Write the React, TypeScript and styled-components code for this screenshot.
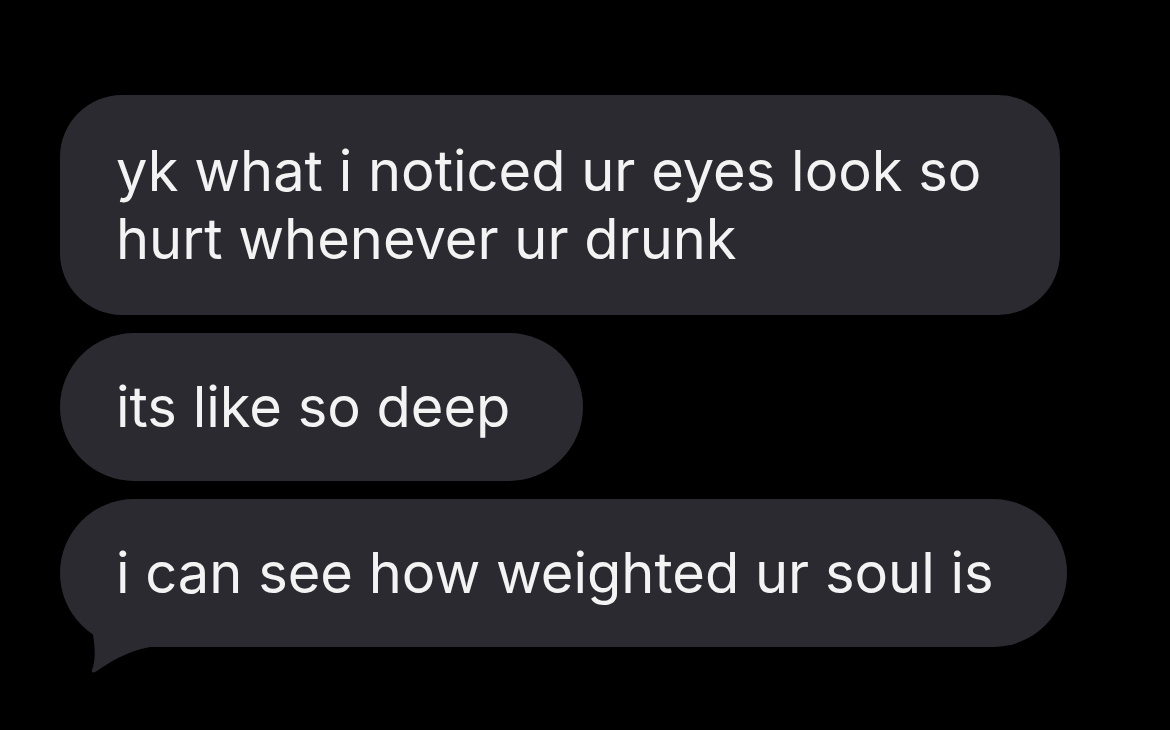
import React from "react";
import styled, { createGlobalStyle } from "styled-components";

const GlobalStyle = createGlobalStyle`
  html, body {
    margin: 0;
    padding: 0;
    background: #000;
  }
  body {
    width: 1170px;
    height: 730px;
    overflow: hidden;
  }
`;

const Screen = styled.div`
  width: 1170px;
  height: 730px;
  background: #000;
  box-sizing: border-box;
  padding: 95px 0 0 60px;
  display: flex;
  flex-direction: column;
  align-items: flex-start;
  gap: 18px;
  font-family: Inter, "Liberation Sans", Arial, sans-serif;
`;

const Bubble = styled.div<{ $multi?: boolean }>`
  position: relative;
  box-sizing: border-box;
  max-width: ${(p) => (p.$multi ? "1000px" : "none")};
  white-space: ${(p) => (p.$multi ? "normal" : "nowrap")};
  background: #2b2a30;
  color: #f3f3f3;
  font-size: 56px;
  line-height: 68px;
  padding: ${(p) => (p.$multi ? "42px 75px 42px 56px" : "40px 73px 40px 56px")};
  border-radius: ${(p) => (p.$multi ? "62px" : "74px")};
`;

const Tail = styled.svg`
  position: absolute;
  left: 20px;
  bottom: -28px;
  width: 70px;
  height: 70px;
  overflow: visible;
`;

export default function App() {
  return (
    <>
      <GlobalStyle />
      <Screen>
        <Bubble $multi>yk what i noticed ur eyes look so hurt whenever ur drunk</Bubble>
        <Bubble>its like so deep</Bubble>
        <Bubble>
          i can see how weighted ur soul is
          <Tail viewBox="0 0 70 70">
            <path
              d="M 16 5 L 13 30 C 15 42 16 55 12 65 C 11 68 14 68 17 66 C 30 57 45 47 70 42 L 70 5 Z"
              fill="#2b2a30"
            />
          </Tail>
        </Bubble>
      </Screen>
    </>
  );
}
